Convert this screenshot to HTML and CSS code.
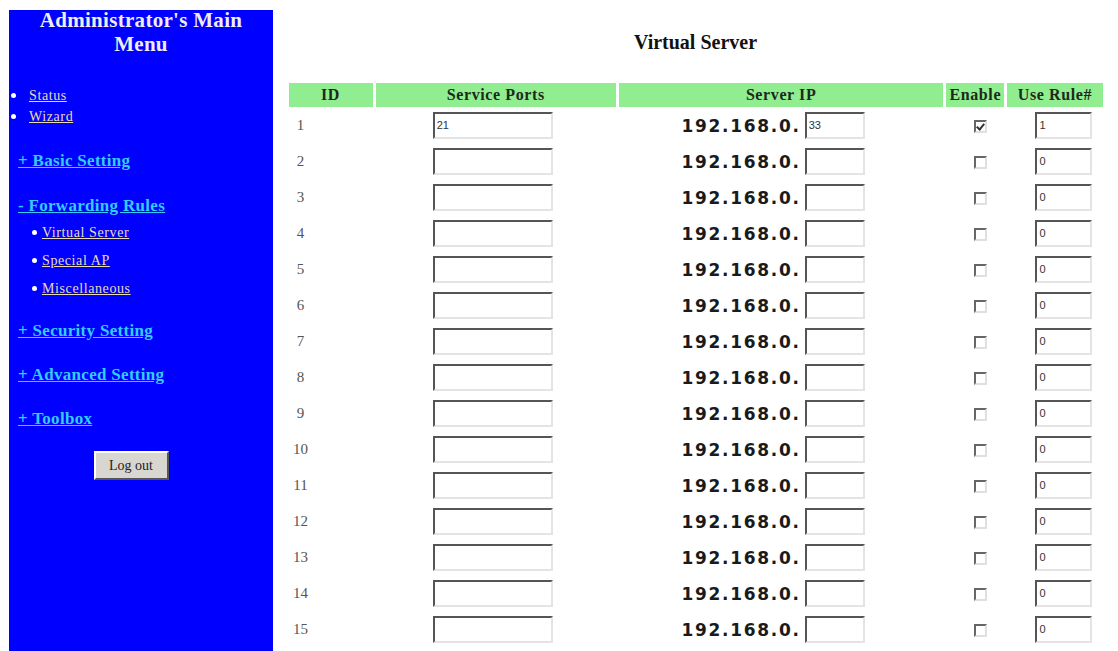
FILE: index.html
```html
<!DOCTYPE html>
<html>
<head>
<meta charset="utf-8">
<title>Virtual Server</title>
<link rel="stylesheet" href="styles.css">
</head>
<body>
  <div class="menu">
    <h2 class="menu-title">Administrator's Main<br>Menu</h2>

    <ul class="plain-list">
      <li><a href="#">Status</a></li>
      <li><a href="#">Wizard</a></li>
    </ul>

    <a class="section" href="#">+ Basic Setting</a>
    <a class="section open" href="#">- Forwarding Rules</a>
    <ul class="sub-list">
      <li><a href="#">Virtual Server</a></li>
      <li><a href="#">Special AP</a></li>
      <li><a href="#">Miscellaneous</a></li>
    </ul>
    <a class="section after-sub" href="#">+ Security Setting</a>
    <a class="section" href="#">+ Advanced Setting</a>
    <a class="section" href="#">+ Toolbox</a>

    <div class="logout-row">
      <button type="button" class="logout-btn">Log out</button>
    </div>
  </div>

  <div class="content">
    <h1 class="page-title">Virtual Server</h1>
    <form id="vserver">
      <table class="rules">
        <colgroup>
          <col class="c-id"><col class="c-ports"><col class="c-ip"><col class="c-enable"><col class="c-rule">
        </colgroup>
        <thead>
          <tr>
            <th>ID</th>
            <th>Service Ports</th>
            <th>Server IP</th>
            <th>Enable</th>
            <th>Use Rule#</th>
          </tr>
        </thead>
        <tbody id="rows"></tbody>
      </table>
    </form>
  </div>

  <script>
    var rows = document.getElementById("rows");
    for (var i = 1; i <= 15; i++) {
      var first = i === 1;
      var tr = document.createElement("tr");
      tr.innerHTML =
        '<td class="id">' + i + '</td>' +
        '<td><input class="box ports" type="text" value="' + (first ? '21' : '') + '"></td>' +
        '<td class="ip"><span class="prefix">192.168.0.</span> <input class="box host" type="text" value="' + (first ? '33' : '') + '"></td>' +
        '<td class="enable"><input class="chk" type="checkbox"' + (first ? ' checked' : '') + '></td>' +
        '<td><input class="box rule" type="text" value="' + (first ? '1' : '0') + '"></td>';
      rows.appendChild(tr);
    }
  </script>
</body>
</html>
```

FILE: styles.css
```css
body {
    margin: 0;
    display: flex;
    font-family: "Liberation Serif", serif;
    background-color: #fff;
    min-height: 651px;
}

.menu {
    width: 264px;
    margin: 10px 0 0 9px;
    background-color: #0000ff;
    color: #f2f2f2;
    box-sizing: border-box;
}

.menu-title {
    margin: -2px 0 0 0;
    font-size: 21px;
    line-height: 24px;
    letter-spacing: 0.3px;
    text-align: center;
    color: #eeeeee;
}

.plain-list {
    list-style: none;
    margin: 29px 0 0 0;
    padding: 0;
    font-size: 14px;
    letter-spacing: 0.6px;
    line-height: 21px;
}

.plain-list li,
.sub-list li {
    position: relative;
    padding-left: 20px;
}

.plain-list li::before,
.sub-list li::before {
    content: "";
    position: absolute;
    left: 2px;
    top: 8px;
    width: 5px;
    height: 5px;
    border-radius: 50%;
    background-color: #fff;
}

.plain-list a,
.sub-list a {
    color: #e8dcae;
}

.section {
    display: block;
    margin: 24px 0 0 9px;
    font-size: 17px;
    font-weight: bold;
    letter-spacing: 0.3px;
    line-height: 20px;
    color: #33ccff;
}

.section.open {
    margin-top: 25px;
}

.sub-list {
    list-style: none;
    margin: 3px 0 0 0;
    padding: 0 0 0 22px;
    font-size: 14px;
    letter-spacing: 0.6px;
    line-height: 28px;
}

.sub-list li {
    padding-left: 11px;
}

.sub-list li::before {
    left: 1px;
    top: 11px;
}

.section.after-sub {
    margin-top: 18px;
}

.logout-row {
    text-align: center;
    margin-top: 22px;
    padding-right: 20px;
}

.logout-btn {
    width: 75px;
    height: 29px;
    font-family: "Liberation Serif", serif;
    font-size: 14px;
    color: #222;
    background-color: #d8d6d0;
    border: 2px solid;
    border-color: #fff #555 #555 #fff;
    padding: 0;
}

.content {
    flex: 1;
    display: flex;
    flex-direction: column;
    align-items: center;
}

.page-title {
    margin: 31px 0 0 0;
    font-size: 20px;
    line-height: 22px;
    color: #111;
}

.rules {
    margin-top: 30px;
    border-collapse: separate;
    border-spacing: 3px 0;
    table-layout: fixed;
    width: 820px;
}

.c-id { width: 84px; }
.c-ports { width: 240px; }
.c-ip { width: 324px; }
.c-enable { width: 58px; }
.c-rule { width: 95px; }

.rules th {
    background-color: #90ee90;
    height: 24px;
    padding: 0;
    font-size: 16px;
    letter-spacing: 0.6px;
    color: #1c2a1c;
}

.rules td {
    height: 36px;
    padding: 0;
    text-align: center;
    vertical-align: middle;
}

.rules td.id {
    padding-right: 60px;
    font-size: 15px;
    color: #555;
}

.box {
    box-sizing: border-box;
    height: 27px;
    margin: 0;
    padding: 0 0 0 2px;
    font-family: "Liberation Sans", sans-serif;
    font-size: 11px;
    color: #333;
    border: 2px solid;
    border-color: #555 #e4e4e4 #e4e4e4 #555;
    background-color: #fff;
    vertical-align: middle;
}

.ports { width: 120px; margin-right: 6px; }
.host { width: 60px; }
.rule { width: 57px; margin-left: 18px; }

.rules td.ip {
    white-space: nowrap;
    padding-right: 16px;
}

.prefix {
    font-family: "DejaVu Sans", sans-serif;
    font-weight: bold;
    font-size: 17px;
    letter-spacing: 1.7px;
    color: #1a1a1a;
    vertical-align: middle;
}

.chk {
    appearance: none;
    -webkit-appearance: none;
    box-sizing: border-box;
    width: 13px;
    height: 13px;
    margin: 0 0 0 10px;
    border: 2px solid;
    border-color: #666 #e0e0e0 #e0e0e0 #666;
    background-color: #fff;
    position: relative;
    vertical-align: middle;
}

.chk:checked::after {
    content: "";
    position: absolute;
    left: 2px;
    top: 0;
    width: 3px;
    height: 6px;
    border: solid #333;
    border-width: 0 2px 2px 0;
    transform: rotate(40deg);
}
```
